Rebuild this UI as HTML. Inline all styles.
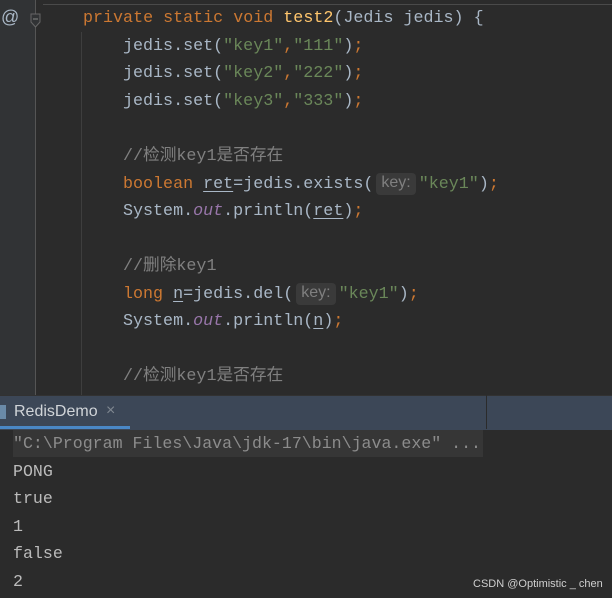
<!DOCTYPE html>
<html><head><meta charset="utf-8"><style>
body{margin:0;width:612px;height:598px;background:#2b2b2b;position:relative;overflow:hidden;font-family:"Liberation Mono","Noto Sans CJK SC",monospace;}
.l{position:absolute;font-size:16.7px;line-height:20px;white-space:pre;color:#a9b7c6;}
.k{color:#cc7832}.s{color:#6a8759}.c{color:#808080}.m{color:#ffc66d}.f{color:#9876aa;font-style:italic}
.u{text-decoration:underline;text-underline-offset:3px}
.h{display:inline-block;background:#3a3a3a;color:#7f7f7f;font-family:"Liberation Sans",sans-serif;font-size:16px;border-radius:4px;padding:0 5px;line-height:20px;height:22px;margin:-2px 3px 0 3px;vertical-align:top}
.o{position:absolute;left:13px;font-size:16.6px;color:#bbbbbb;white-space:pre;line-height:20px}
</style></head><body>
<div style="position:absolute;left:0;top:0;width:35px;height:395px;background:#313335"></div>
<div style="position:absolute;left:35px;top:0;width:1px;height:395px;background:#555"></div>
<div style="position:absolute;left:43px;top:4px;width:569px;height:1px;background:#4a4a4a"></div>
<div style="position:absolute;left:81px;top:32px;width:1px;height:363px;background:#3e3e3e"></div>
<div style="position:absolute;left:1px;top:7px;color:#a9b7c6;font-size:18px;font-family:'Liberation Sans',sans-serif">@</div>
<svg style="position:absolute;left:29px;top:12px" width="14" height="18"><path d="M2 2H11V10L6.5 15L2 10Z" fill="#313335" stroke="#666"/><path d="M4 7H9" stroke="#888"/></svg>
<div class="l" style="left:83px;top:9px"><span class="k">private static void </span><span class="m">test2</span>(Jedis jedis) {</div>
<div class="l" style="left:123px;top:37px">jedis.set(<span class="s">"key1"</span><span class="k">,</span><span class="s">"111"</span>)<span class="k">;</span></div>
<div class="l" style="left:123px;top:64px">jedis.set(<span class="s">"key2"</span><span class="k">,</span><span class="s">"222"</span>)<span class="k">;</span></div>
<div class="l" style="left:123px;top:92px">jedis.set(<span class="s">"key3"</span><span class="k">,</span><span class="s">"333"</span>)<span class="k">;</span></div>
<div class="l c" style="left:123px;top:147px">//检测key1是否存在</div>
<div class="l" style="left:123px;top:175px"><span class="k">boolean </span><span class="u">ret</span>=jedis.exists(<span class="h">key:</span><span class="s">"key1"</span>)<span class="k">;</span></div>
<div class="l" style="left:123px;top:202px">System.<span class="f">out</span>.println(<span class="u">ret</span>)<span class="k">;</span></div>
<div class="l c" style="left:123px;top:257px">//删除key1</div>
<div class="l" style="left:123px;top:285px"><span class="k">long </span><span class="u">n</span>=jedis.del(<span class="h">key:</span><span class="s">"key1"</span>)<span class="k">;</span></div>
<div class="l" style="left:123px;top:312px">System.<span class="f">out</span>.println(<span class="u">n</span>)<span class="k">;</span></div>
<div class="l c" style="left:123px;top:367px">//检测key1是否存在</div>
<div style="position:absolute;left:0;top:395px;width:612px;height:34px;background:#3c4757;border-top:1px solid #323232"></div>
<div style="position:absolute;left:486px;top:395px;width:1px;height:34px;background:#2b2b2b"></div>
<div style="position:absolute;left:0;top:426px;width:130px;height:3px;background:#4a88c7"></div>
<div style="position:absolute;left:0;top:405px;width:6px;height:14px;background:#6a8aa8"></div>
<div style="position:absolute;left:14px;top:403px;color:#d0d4d8;font-family:'Liberation Sans',sans-serif;font-size:16px">RedisDemo</div>
<div style="position:absolute;left:106px;top:402px;color:#7f8790;font-family:'Liberation Sans',sans-serif;font-size:16px">×</div>
<div style="position:absolute;left:13px;top:430px;width:470px;height:27px;background:#363636"></div>
<div class="o" style="top:434px;color:#8c8c8c">"C:\Program Files\Java\jdk-17\bin\java.exe" ...</div>
<div class="o" style="top:462px">PONG</div>
<div class="o" style="top:489px">true</div>
<div class="o" style="top:517px">1</div>
<div class="o" style="top:544px">false</div>
<div class="o" style="top:572px">2</div>
<div style="position:absolute;left:473px;top:578px;color:#cfcfcf;font-family:'Liberation Sans',sans-serif;font-size:11px">CSDN @Optimistic _ chen</div>
</body></html>
